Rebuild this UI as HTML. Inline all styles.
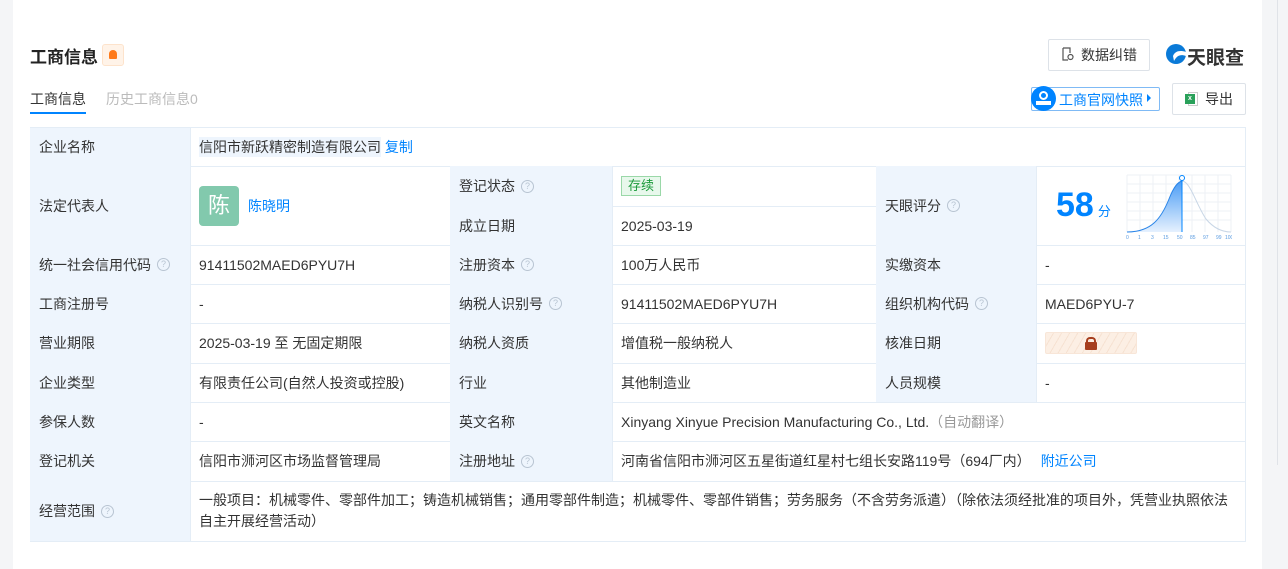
<!DOCTYPE html>
<html><head><meta charset="utf-8"><style>
*{margin:0;padding:0;box-sizing:border-box}
body{width:1288px;height:569px;background:#f4f5f7;font-family:"Liberation Sans","Noto Sans CJK SC",sans-serif;font-size:14px;color:#333;position:relative;overflow:hidden}
.card{position:absolute;left:13px;top:0;width:1249px;height:569px;background:#fff}
.a{position:absolute}
.c{position:absolute;border-right:1px solid #e4edf6;border-bottom:1px solid #e4edf6;display:flex;align-items:center;padding-left:9px;font-size:14px;color:#333}
.l{background:#eef5fd}
.q{display:inline-block;width:13px;height:13px;border:1px solid #b8c4d2;border-radius:50%;font-size:9px;color:#b8c4d2;text-align:center;line-height:11px;margin-left:6px}
.blue{color:#0084ff}
</style></head><body>
<div class="card"></div>
<div class="a" style="left:1277px;top:0;width:1px;height:465px;background:#e0e3e8"></div>
<div class="a" style="left:30px;top:43px;font-size:17px;font-weight:bold;color:#222">工商信息</div>
<div class="a" style="left:102px;top:44px;width:22px;height:22px;background:#fff3e8;border:1px solid #fde3cc;border-radius:3px"><div style="position:absolute;left:6px;top:5px;width:8px;height:9px;background:#ff7a1a;border-radius:4px 4px 1px 1px"></div></div>
<div class="a" style="left:30px;top:89px;font-size:14px;color:#333">工商信息</div>
<div class="a" style="left:30px;top:112px;width:56px;height:2px;background:#0084ff"></div>
<div class="a" style="left:106px;top:89px;font-size:14px;color:#bbb">历史工商信息0</div>
<div class="a" style="left:1048px;top:39px;width:102px;height:32px;border:1px solid #dde2e8;border-radius:2px;font-size:14px;line-height:30px;padding-left:32px">数据纠错</div>
<svg class="a" style="left:1062px;top:47px" width="12" height="14" viewBox="0 0 12 14"><path d="M1 1H8V6M1 1V13H6" fill="none" stroke="#555" stroke-width="1.2"/><circle cx="8.5" cy="10" r="2.5" fill="none" stroke="#555" stroke-width="1.2"/></svg>
<svg class="a" style="left:1165px;top:43px" width="22" height="22" viewBox="0 0 22 22"><circle cx="11" cy="11" r="10" fill="#0a7ad8"/><path d="M8 13C10 8 15 7 21 9L21 13C16 11 12 12 9 18Z" fill="#fff"/></svg>
<div class="a" style="left:1187px;top:43px;font-size:19px;font-weight:bold;color:#333">天眼查</div>
<div class="a" style="left:1031px;top:87px;width:129px;height:24px;border:1px solid #7fbaf5;border-radius:2px"></div>
<div class="a" style="left:1031px;top:86px;width:25px;height:25px;border-radius:50%;background:#0084ff"><div style="position:absolute;left:8px;top:5px;width:9px;height:9px;border:2px solid #fff;border-radius:50%"></div><div style="position:absolute;left:5px;top:15px;width:15px;height:4px;background:#fff"></div></div>
<div class="a blue" style="left:1059px;top:90px;font-size:14px">工商官网快照</div>
<div class="a" style="left:1147px;top:94px;border-left:4px solid #0084ff;border-top:4px solid transparent;border-bottom:4px solid transparent"></div>
<div class="a" style="left:1172px;top:83px;width:74px;height:32px;border:1px solid #dde2e8;border-radius:2px;line-height:30px;padding-left:32px">导出</div>
<div class="a" style="left:1188px;top:92px;width:10px;height:14px;border:1px solid #ccc;background:#fff"></div>
<div class="a" style="left:1185px;top:94px;width:10px;height:10px;background:#2aa15a;color:#fff;font-size:7px;text-align:center;line-height:10px;font-weight:bold">x</div>

<div class="a" style="left:30px;top:127px;width:1216px;height:415px;border-top:1px solid #e4edf6;border-left:1px solid #e4edf6"></div>
<div class="c l" style="left:30px;top:128px;width:161px;height:39px">企业名称</div>
<div class="c" style="left:190px;top:128px;width:1056px;height:39px"><span style="background:#eef5fd">信阳市新跃精密制造有限公司</span>&nbsp;<span class="blue">复制</span></div>
<div class="c l" style="left:30px;top:166px;width:161px;height:80px">法定代表人</div>
<div class="c" style="left:190px;top:166px;width:261px;height:80px"><div style="width:40px;height:40px;background:#82c9ad;border-radius:4px;color:#fff;font-size:22px;text-align:center;line-height:40px;margin-right:9px">陈</div><span class="blue">陈晓明</span></div>
<div class="c l" style="left:450px;top:166px;width:163px;height:41px">登记状态<span class="q">?</span></div>
<div class="c" style="left:612px;top:166px;width:265px;height:41px"><span style="background:#e8f8ec;border:1px solid #9ad8a8;color:#1a9a3a;padding:0 6px;font-size:13px;line-height:18px">存续</span></div>
<div class="c l" style="left:450px;top:206px;width:163px;height:40px">成立日期</div>
<div class="c" style="left:612px;top:206px;width:265px;height:40px">2025-03-19</div>
<div class="c l" style="left:876px;top:166px;width:161px;height:80px">天眼评分<span class="q">?</span></div>
<div class="c" style="left:1036px;top:166px;width:210px;height:80px">
<span style="font-size:34px;font-weight:bold;color:#0084ff;margin-left:11px">58</span><span class="blue" style="font-size:13px;margin:10px 0 0 4px">分</span>
<svg class="a" style="left:90px;top:8px" width="106" height="66" viewBox="0 0 106 66"><g stroke="#edf1f5" stroke-width="1"><path d="M1 1V58M14 1V58M27 1V58M40 1V58M53 1V58M66 1V58M79 1V58M92 1V58M105 1V58M1 1H105M1 10H105M1 19H105M1 28H105M1 37H105M1 46H105"/></g><defs><linearGradient id="g" x1="0" y1="0" x2="0" y2="1"><stop offset="0" stop-color="#4a9cf5"/><stop offset="1" stop-color="#e6f1fe"/></linearGradient></defs><path d="M1 58C25 58 35 45 43 25 48 12 52 8 56 7V58Z" fill="url(#g)"/><path d="M1 58C25 58 35 45 43 25 48 12 52 8 56 7" fill="none" stroke="#2a85e8"/><path d="M56 7C64 7 70 30 80 45 90 57 100 58 105 58" fill="none" stroke="#c8d6e6"/><path d="M56 5V58" stroke="#0084ff"/><circle cx="56" cy="4" r="2.5" fill="#fff" stroke="#0084ff"/><g font-size="5" fill="#5a9be0" font-family="Liberation Sans"><text x="0" y="65">0</text><text x="12" y="65">1</text><text x="25" y="65">3</text><text x="37" y="65">15</text><text x="51" y="65">50</text><text x="64" y="65">85</text><text x="77" y="65">97</text><text x="90" y="65">99</text><text x="99" y="65">100</text></g></svg></div>
<div class="c l" style="left:30px;top:245px;width:161px;height:40px">统一社会信用代码<span class="q">?</span></div>
<div class="c" style="left:190px;top:245px;width:261px;height:40px">91411502MAED6PYU7H</div>
<div class="c l" style="left:450px;top:245px;width:163px;height:40px">注册资本<span class="q">?</span></div>
<div class="c" style="left:612px;top:245px;width:265px;height:40px">100万人民币</div>
<div class="c l" style="left:876px;top:245px;width:161px;height:40px">实缴资本</div>
<div class="c" style="left:1036px;top:245px;width:210px;height:40px">-</div>
<div class="c l" style="left:30px;top:284px;width:161px;height:40px">工商注册号</div>
<div class="c" style="left:190px;top:284px;width:261px;height:40px">-</div>
<div class="c l" style="left:450px;top:284px;width:163px;height:40px">纳税人识别号<span class="q">?</span></div>
<div class="c" style="left:612px;top:284px;width:265px;height:40px">91411502MAED6PYU7H</div>
<div class="c l" style="left:876px;top:284px;width:161px;height:40px">组织机构代码<span class="q">?</span></div>
<div class="c" style="left:1036px;top:284px;width:210px;height:40px">MAED6PYU-7</div>
<div class="c l" style="left:30px;top:323px;width:161px;height:41px">营业期限</div>
<div class="c" style="left:190px;top:323px;width:261px;height:41px">2025-03-19 至 无固定期限</div>
<div class="c l" style="left:450px;top:323px;width:163px;height:41px">纳税人资质</div>
<div class="c" style="left:612px;top:323px;width:265px;height:41px">增值税一般纳税人</div>
<div class="c l" style="left:876px;top:323px;width:161px;height:41px">核准日期</div>
<div class="c" style="left:1036px;top:323px;width:210px;height:41px"><div style="width:92px;height:22px;background:repeating-linear-gradient(120deg,#fcefe4 0 6px,#f6e2d2 6px 7px);border:1px solid #f8e6d8;border-radius:2px;position:relative"><div style="position:absolute;left:40px;top:4px;width:10px;height:5px;border:2px solid #a63e1e;border-bottom:none;border-radius:4px 4px 0 0"></div><div style="position:absolute;left:39px;top:9px;width:12px;height:8px;background:#a63e1e;border-radius:1px"></div></div></div>
<div class="c l" style="left:30px;top:363px;width:161px;height:40px">企业类型</div>
<div class="c" style="left:190px;top:363px;width:261px;height:40px">有限责任公司(自然人投资或控股)</div>
<div class="c l" style="left:450px;top:363px;width:163px;height:40px">行业</div>
<div class="c" style="left:612px;top:363px;width:265px;height:40px">其他制造业</div>
<div class="c l" style="left:876px;top:363px;width:161px;height:40px">人员规模</div>
<div class="c" style="left:1036px;top:363px;width:210px;height:40px">-</div>
<div class="c l" style="left:30px;top:402px;width:161px;height:40px">参保人数</div>
<div class="c" style="left:190px;top:402px;width:261px;height:40px">-</div>
<div class="c l" style="left:450px;top:402px;width:163px;height:40px">英文名称</div>
<div class="c" style="left:612px;top:402px;width:634px;height:40px">Xinyang Xinyue Precision Manufacturing Co., Ltd.<span style="color:#999">（自动翻译）</span></div>
<div class="c l" style="left:30px;top:441px;width:161px;height:41px">登记机关</div>
<div class="c" style="left:190px;top:441px;width:261px;height:41px">信阳市浉河区市场监督管理局</div>
<div class="c l" style="left:450px;top:441px;width:163px;height:41px">注册地址<span class="q">?</span></div>
<div class="c" style="left:612px;top:441px;width:634px;height:41px">河南省信阳市浉河区五星街道红星村七组长安路119号（694厂内）<span class="blue" style="margin-left:10px">附近公司</span></div>
<div class="c l" style="left:30px;top:481px;width:161px;height:61px">经营范围<span class="q">?</span></div>
<div class="c" style="left:190px;top:481px;width:1056px;height:61px;line-height:21px;padding-right:8px">一般项目：机械零件、零部件加工；铸造机械销售；通用零部件制造；机械零件、零部件销售；劳务服务（不含劳务派遣）（除依法须经批准的项目外，凭营业执照依法自主开展经营活动）</div>
</body></html>
